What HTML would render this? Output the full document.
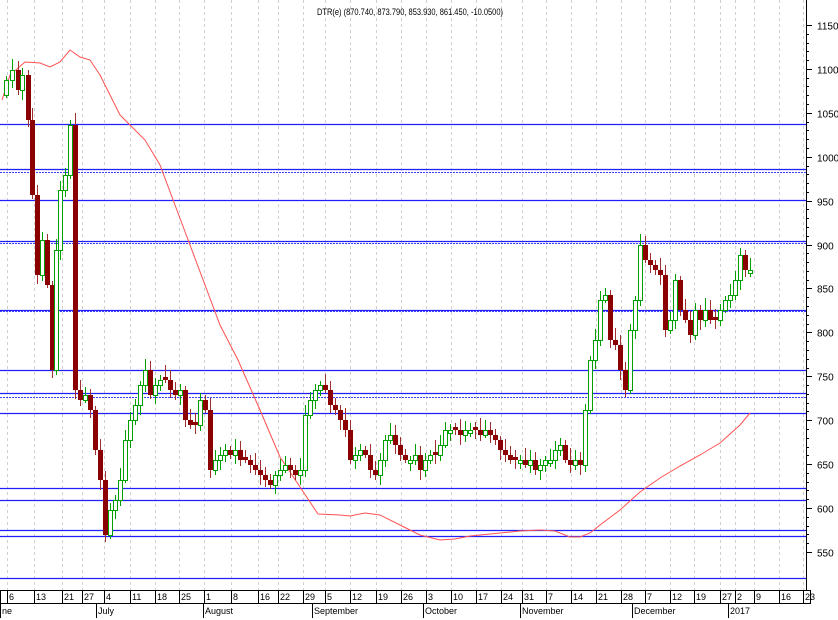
<!DOCTYPE html>
<html><head><meta charset="utf-8"><style>
html,body{margin:0;padding:0;background:#fff;}
svg{display:block;font-family:"Liberation Sans",sans-serif;}
</style></head><body>
<svg id="c" width="838" height="620" viewBox="0 0 838 620" xmlns="http://www.w3.org/2000/svg">
<rect width="838" height="620" fill="#fff"/>
<g id="grid"></g>
<g id="hl"></g>
<polyline fill="none" stroke="#ff5050" stroke-width="1" points="2,100 10,75 25,62 40,63 50,67 60,62 70,50 80,57 90,60 100,75 110,95 120,115 130,125 145,140 160,165 175,205 190,245 205,285 220,325 238,360 260,410 280,457 300,487 318,514 340,515 350,516 365,513 380,515 400,525 420,535 440,540 455,539 470,536 500,533 520,531 540,530 555,531 570,537 580,537 590,533 600,525 620,510 640,492 660,478 680,466 700,455 720,443 740,425 750,413"/>
<g id="cd"></g>
<line x1="806.5" y1="0" x2="806.5" y2="590" stroke="#000"/>
<g id="ax" font-size="10" fill="#000"></g>
<text x="410" y="15" font-size="9.5" text-anchor="middle" textLength="186" lengthAdjust="spacingAndGlyphs">DTR(e) (870.740, 873.790, 853.930, 861.450, -10.0500)</text>
<rect x="0.5" y="590.5" width="810" height="13" fill="none" stroke="#000"/>
<g id="bx" font-size="9"></g>
</svg>
<script>
var NS="http://www.w3.org/2000/svg";
function el(p,t,a,txt){var e=document.createElementNS(NS,t);for(var k in a)e.setAttribute(k,a[k]);if(txt!=null)e.textContent=txt;document.getElementById(p).appendChild(e);return e;}
var ticks=[[8,"6"],[35,"13"],[63,"21"],[83,"27"],[105,"4"],[131,"11"],[156,"18"],[180,"25"],[205,"1"],[232,"8"],[259,"16"],[279,"22"],[304,"29"],[326,"5"],[351,"12"],[377,"19"],[402,"26"],[427,"3"],[452,"10"],[477,"17"],[502,"24"],[523,"31"],[547,"7"],[572,"14"],[597,"21"],[622,"28"],[646,"7"],[671,"12"],[695,"19"],[721,"27"],[736,"2"],[755,"9"],[780,"16"],[804,"23"]];
ticks.forEach(function(t){
 el("grid","line",{x1:t[0]-0.5,y1:0,x2:t[0]-0.5,y2:590,stroke:"#d0d0d0","stroke-dasharray":"3,3"});
 el("bx","line",{x1:t[0]-0.5,y1:590,x2:t[0]-0.5,y2:603,stroke:"#000"});
 el("bx","text",{x:t[0]+1,y:600},t[1]);
});
[[2,"ne"],[98,"July"],[205,"August"],[314,"September"],[425,"October"],[522,"November"],[634,"December"],[730,"2017"]].forEach(function(m){
 el("bx","line",{x1:m[0]-1.5,y1:603,x2:m[0]-1.5,y2:618,stroke:"#000"});
 el("bx","text",{x:m[0],y:614},m[1]);
});
[124,169,200,241,310,370,393,413,488,500,530,536,578].forEach(function(y){el("hl","line",{x1:0,y1:y+.5,x2:806,y2:y+.5,stroke:"#2020ff","stroke-width":1.3});});
[172,243,311,397].forEach(function(y){el("hl","line",{x1:0,y1:y+.5,x2:806,y2:y+.5,stroke:"#4040ff","stroke-dasharray":"2,1"});});
for(var p=550;p<=1150;p+=10){var yy=Math.round(25+(1150-p)*0.8783)+0.5;el("ax","line",{x1:806,y1:yy,x2:p%50==0?812:809,y2:yy,stroke:"#000"});if(p%50==0)el("ax","text",{x:817,y:yy+4},""+p);}
var pts=[[6,80],[12,70],[18,90],[22,75],[28,120],[32,195],[37,275],[42,240],[47,285],[52,370],[56,250],[60,190],[65,175],[70,125],[75,390],[80,400],[85,395],[90,410],[95,450],[100,480],[105,535],[110,510],[115,500],[120,480],[125,440],[130,420],[135,405],[140,385],[145,370],[150,395],[155,385],[160,380],[165,380],[170,390],[175,395],[180,390],[185,420],[190,425],[195,425],[200,400],[205,410],[210,470],[215,460],[220,455],[225,450],[230,455],[235,450],[240,460],[245,460],[250,465],[255,470],[260,475],[265,480],[270,485],[275,475],[280,470],[285,465],[290,470],[295,475],[300,470],[305,415],[310,400],[315,390],[320,385],[325,390],[330,405],[335,410],[340,420],[345,430],[350,460],[355,455],[360,450],[365,455],[370,470],[375,475],[380,460],[385,440],[390,435],[395,445],[400,455],[405,460],[410,460],[415,455],[420,470],[425,460],[430,455],[435,455],[440,445],[445,430],[450,430],[455,430],[460,435],[465,430],[470,430],[475,430],[480,435],[485,430],[490,435],[495,440],[500,450],[505,455],[510,460],[515,460],[520,460],[525,465],[530,460],[535,470],[540,465],[545,460],[550,460],[555,450],[560,445],[565,460],[570,465],[575,460],[580,465],[585,410],[590,360],[595,340],[600,300],[605,295],[610,340],[615,345],[620,370],[625,390],[630,330],[635,300],[640,245],[645,260],[650,265],[655,270],[660,275],[665,330],[670,320],[675,280],[680,310],[685,320],[690,335],[695,310],[700,320],[705,310],[710,320],[715,320],[720,310],[725,300],[730,295],[735,280],[740,255],[745,270],[750,270]];
for(var i=0;i<pts.length;i++){
 var cx=pts[i][0],cc=pts[i][1],oo=i?pts[i-1][1]:95;
 if(Math.abs(cc-oo)<2)oo=cc+((i%2)?3:-3);
 var tp=Math.min(oo,cc),bt=Math.max(oo,cc);
 var hi=tp-4-(i*7%9),lo=bt+3+(i*5%8);
 var bull=cc<oo, col=bull?"#00a000":"#8b0000";
 el("cd","line",{x1:cx+0.5,y1:hi,x2:cx+0.5,y2:lo,stroke:bull?"#00a000":"#a03030"});
 if(bull)el("cd","rect",{x:cx-1.5,y:tp+0.5,width:4,height:bt-tp,fill:"#fff",stroke:col});
 else el("cd","rect",{x:cx-2,y:tp,width:5,height:bt-tp,fill:col});
}
</script>
</body></html>
